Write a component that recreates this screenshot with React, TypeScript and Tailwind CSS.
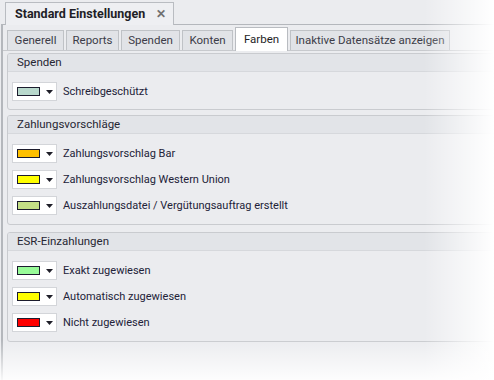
import React from 'react'

const font = { fontFamily: 'Roboto, "Open Sans", Arial, sans-serif' }

type Row = { color: string; label: string }

const groups: { title: string; rows: Row[]; box: string; body: string }[] = [
  {
    title: 'Spenden',
    box: 'mt-[2px]',
    body: 'pt-[10px] pb-[8px]',
    rows: [{ color: '#b8d8cc', label: 'Schreibgeschützt' }],
  },
  {
    title: 'Zahlungsvorschläge',
    box: 'mt-[5px]',
    body: 'pt-[10px] pb-[9px]',
    rows: [
      { color: '#ffc000', label: 'Zahlungsvorschlag Bar' },
      { color: '#ffff00', label: 'Zahlungsvorschlag Western Union' },
      { color: '#c4df86', label: 'Auszahlungsdatei / Vergütungsauftrag erstellt' },
    ],
  },
  {
    title: 'ESR-Einzahlungen',
    box: 'mt-[7px]',
    body: 'pt-[10px] pb-[9px]',
    rows: [
      { color: '#98fb98', label: 'Exakt zugewiesen' },
      { color: '#ffff00', label: 'Automatisch zugewiesen' },
      { color: '#ff0000', label: 'Nicht zugewiesen' },
    ],
  },
]

const tabs = [
  { label: 'Generell', w: 'w-[57px]' },
  { label: 'Reports', w: 'w-[53px]' },
  { label: 'Spenden', w: 'w-[59px]' },
  { label: 'Konten', w: 'w-[51px]' },
  { label: 'Farben', w: 'w-[53px]', active: true },
  { label: 'Inaktive Datensätze anzeigen', w: 'w-[160px]' },
]

function ColorPicker({ color }: { color: string }) {
  return (
    <div className="flex h-[19px] w-[45px] shrink-0 items-center border border-[#d3d5d9] bg-white pl-[4px]">
      <div className="h-[9px] w-[23px] border border-[#1c1c2e]" style={{ backgroundColor: color }} />
      <svg width="7" height="4" viewBox="0 0 7 4" className="ml-[6px]">
        <path d="M0 0h7L3.5 4z" fill="#1e1e28" />
      </svg>
    </div>
  )
}

function GroupBox({ title, rows, box, body }: { title: string; rows: Row[]; box: string; body: string }) {
  return (
    <div className={`${box} overflow-hidden rounded-[3px] border border-[#c9cbcf] bg-[#ebecef]`}>
      <div className="flex h-[18px] items-center whitespace-nowrap border-b border-[#d6d8dc] bg-[#e2e4e8] pl-[9px] text-[11.5px] leading-none text-[#262633]">
        {title}
      </div>
      <div className={`${body} flex flex-col gap-[7px] pl-[4px]`}>
        {rows.map((row) => (
          <div key={row.label} className="flex h-[19px] items-center gap-[6px]">
            <ColorPicker color={row.color} />
            <span className="whitespace-nowrap text-[11px] leading-none text-[#222238]">{row.label}</span>
          </div>
        ))}
      </div>
    </div>
  )
}

export default function App() {
  return (
    <div className="relative h-[380px] w-[494px] overflow-hidden bg-[#ebecef]" style={font}>
      {/* document tab */}
      <div className="pt-[2px]">
        <div className="relative z-10 -mb-px ml-[5px] flex h-[23px] w-[169px] items-center border-x border-t border-[#b9bcc1] bg-[#eeeff2]">
          <span className="ml-[9px] whitespace-nowrap text-[12.5px] font-bold leading-none text-[#1e1e26]">
            Standard Einstellungen
          </span>
          <span className="ml-auto mr-[7px] text-[12px] font-bold leading-none text-[#707070]">✕</span>
        </div>
      </div>

      {/* panel */}
      <div className="ml-[1px] h-[400px] border-l-2 border-t border-[#b4b7bc] bg-[#ebecef]">
        <div className="flex items-end gap-[2px] border-b border-[#c7c9cd] pl-[4px] pt-[2px]">
          {tabs.map((t) =>
            t.active ? (
              <div
                key={t.label}
                className={`${t.w} relative -mb-px flex h-[24px] items-center justify-center whitespace-nowrap border-x border-t border-[#b9bcc1] bg-white text-[11.5px] text-[#1e1e26]`}
              >
                {t.label}
              </div>
            ) : (
              <div
                key={t.label}
                className={`${t.w} flex h-[20px] items-center justify-center whitespace-nowrap border-x border-t border-[#bfc2c6] bg-[#e1e3e7] text-[11.5px] text-[#3c3c48]`}
              >
                {t.label}
              </div>
            ),
          )}
        </div>
        <div className="flex flex-col pl-[4px]">
          {groups.map((g) => (
            <GroupBox key={g.title} title={g.title} rows={g.rows} box={g.box} body={g.body} />
          ))}
        </div>
      </div>

      {/* fade overlays */}
      <div className="pointer-events-none absolute inset-y-0 right-0 w-[70px] bg-gradient-to-r from-white/0 to-white" />
      <div className="pointer-events-none absolute inset-x-0 bottom-0 h-[40px] bg-gradient-to-b from-white/0 to-white/90" />
    </div>
  )
}
